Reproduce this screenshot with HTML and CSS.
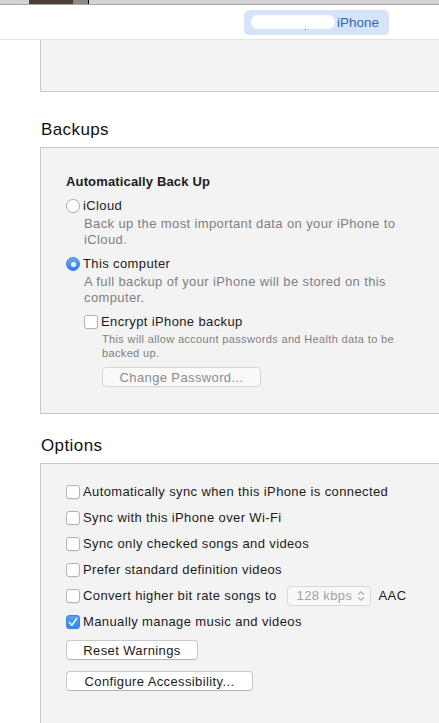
FILE: index.html
```html
<!DOCTYPE html>
<html>
<head>
<meta charset="utf-8">
<link rel="stylesheet" href="styles.css">
</head>
<body>
<div class="strip"><span class="thumb"></span><span class="thumb-gray"></span><span class="strip-line"></span></div>
<header class="header">
  <div class="device"><span class="blur"><span class="blur-dot"></span></span><span class="device-name">iPhone</span></div>
</header>
<div class="panel-top"></div>

<h2 class="section-title backups-title">Backups</h2>
<div class="panel backups">
  <div class="group-title">Automatically Back Up</div>
  <div class="row radio-row first">
    <span class="radio"></span><span>iCloud</span>
  </div>
  <div class="desc">Back up the most important data on your iPhone to iCloud.</div>
  <div class="row radio-row">
    <span class="radio on"><span class="radio-dot"></span></span><span>This computer</span>
  </div>
  <div class="desc">A full backup of your iPhone will be stored on this computer.</div>
  <div class="row check-row indent">
    <span class="check"></span><span>Encrypt iPhone backup</span>
  </div>
  <div class="small-desc">This will allow account passwords and Health data to be backed up.</div>
  <div class="btn btn-disabled btn-change">Change Password...</div>
</div>

<h2 class="section-title options-title">Options</h2>
<div class="panel options">
  <div class="option-list">
    <div class="row opt"><span class="check"></span><span>Automatically sync when this iPhone is connected</span></div>
    <div class="row opt"><span class="check"></span><span>Sync with this iPhone over Wi-Fi</span></div>
    <div class="row opt"><span class="check"></span><span>Sync only checked songs and videos</span></div>
    <div class="row opt"><span class="check"></span><span>Prefer standard definition videos</span></div>
    <div class="row opt"><span class="check"></span><span>Convert higher bit rate songs to</span>
      <span class="select"><span>128 kbps</span>
        <svg class="chev" width="8" height="12" viewBox="0 0 8 12"><path d="M1.2 4.5 L4 1.7 L6.8 4.5 M1.2 7.5 L4 10.3 L6.8 7.5" fill="none" stroke="#a8a8a8" stroke-width="1.1"/></svg>
      </span>
      <span class="aac">AAC</span>
    </div>
    <div class="row opt"><span class="check on"><svg width="14" height="14" viewBox="0 0 14 14"><path d="M3.4 7.6 L5.9 10.2 L10.6 3.6" fill="none" stroke="#fff" stroke-width="1.5" stroke-linecap="round" stroke-linejoin="round"/></svg></span><span>Manually manage music and videos</span></div>
  </div>
  <div class="btn btn-reset">Reset Warnings</div>
  <div class="btn btn-access">Configure Accessibility...</div>
</div>
</body>
</html>
```
FILE: styles.css
```css
* { box-sizing: border-box; }
html, body { margin: 0; padding: 0; }
body {
  width: 439px;
  height: 723px;
  overflow: hidden;
  background: #fff;
  font-family: "Liberation Sans", Arial, Helvetica, sans-serif;
  font-size: 13px;
  letter-spacing: 0.38px;
  color: #1b1b1b;
}

.strip {
  height: 5px;
  display: flex;
  background: #d3d3d3;
  border-bottom: 1px solid #a8a8a8;
}
.thumb { width: 44px; margin-left: 29px; background: #4c3c32; }
.thumb-gray { width: 15px; background: #8a8a8a; }
.strip-line { width: 1px; background: #000; }

.header {
  height: 35px;
  border-bottom: 1px solid #e4e4e4;
  display: flex;
  justify-content: flex-end;
  padding: 5px 50px 0 0;
}
.device {
  height: 25px;
  width: 145px;
  background: #d5e5f7;
  border-radius: 5px;
  display: flex;
  align-items: center;
  padding-left: 7px;
}
.blur {
  position: relative;
  width: 84px;
  height: 14px;
  margin-top: -2px;
  margin-right: 2px;
  background: #fff;
  border-radius: 7px;
}
.blur-dot {
  position: absolute;
  left: 54px;
  bottom: -1px;
  width: 1px;
  height: 1px;
  background: #2e6cc0;
}
.device-name { color: #2e6cc0; font-size: 13.5px; letter-spacing: 0; }

.panel-top {
  margin-left: 40px;
  height: 52px;
  background: #f3f3f3;
  border-left: 1px solid #c9c9c9;
  border-bottom: 1px solid #c9c9c9;
}

.section-title {
  margin: 0 0 7px 41px;
  font-size: 17px;
  line-height: 20px;
  font-weight: normal;
  letter-spacing: 0.4px;
  color: #111;
}
.backups-title { margin-top: 28px; }
.options-title { margin-top: 22px; }

.panel {
  margin-left: 40px;
  background: #f3f3f3;
  border: 1px solid #c9c9c9;
  border-right: none;
  padding: 26px 0 26px 25px;
}

.group-title { font-weight: bold; line-height: 16px; letter-spacing: 0.15px; }

.row {
  display: flex;
  align-items: center;
  gap: 3px;
  line-height: 16px;
}
.radio-row { height: 16px; margin-top: 8px; }
.check-row { height: 16px; margin-top: 8px; }
.indent { margin-left: 18px; }

.desc {
  color: #808080;
  margin: 2px 0 0 18px;
  line-height: 16px;
  max-width: 330px;
}
.small-desc {
  color: #808080;
  font-size: 11px;
  letter-spacing: 0.35px;
  line-height: 14px;
  margin: 2px 0 0 36px;
  max-width: 312px;
}

.radio {
  width: 14px;
  height: 14px;
  border-radius: 50%;
  background: #fff;
  border: 1px solid #adadad;
  display: flex;
  align-items: center;
  justify-content: center;
  flex: none;
}
.radio.on {
  border: 1px solid #3b84e6;
  background: linear-gradient(#62aafb, #2f80f1);
}
.radio-dot { width: 5px; height: 5px; border-radius: 50%; background: #fff; }

.check {
  width: 14px;
  height: 14px;
  border-radius: 3px;
  background: #fff;
  border: 1px solid #b3b3b3;
  box-shadow: 0 0.5px 0 rgba(0,0,0,0.08);
  flex: none;
  display: flex;
}
.check.on {
  background: linear-gradient(#55a0fa, #3188f4);
  border-color: #3a84e8;
}
.check.on svg { margin: -1px; }

.btn {
  height: 20px;
  background: #fff;
  border: 1px solid #c8c8c8;
  border-bottom-color: #b2b2b2;
  border-radius: 4px;
  display: flex;
  align-items: center;
  justify-content: center;
  color: #1b1b1b;
}
.btn-disabled {
  background: #f9f9f9;
  border-color: #d5d5d5;
  color: #8c8c8c;
}
.btn-change { width: 159px; margin: 7px 0 0 36px; }
.btn-reset { width: 132px; margin-top: 8px; }
.btn-access { width: 187px; margin-top: 11px; }

.options { padding: 18px 0 40px 25px; }
.option-list { display: flex; flex-direction: column; gap: 6px; }
.opt { height: 20px; }

.select {
  width: 84px;
  height: 20px;
  margin-left: 7px;
  border: 1px solid #d8d8d8;
  border-radius: 4px;
  background: #f8f8f8;
  color: #a2a2a2;
  display: flex;
  align-items: center;
  justify-content: space-between;
  padding: 0 5px 0 9px;
}
.chev { display: block; }
.aac { margin-left: 5px; }
```
